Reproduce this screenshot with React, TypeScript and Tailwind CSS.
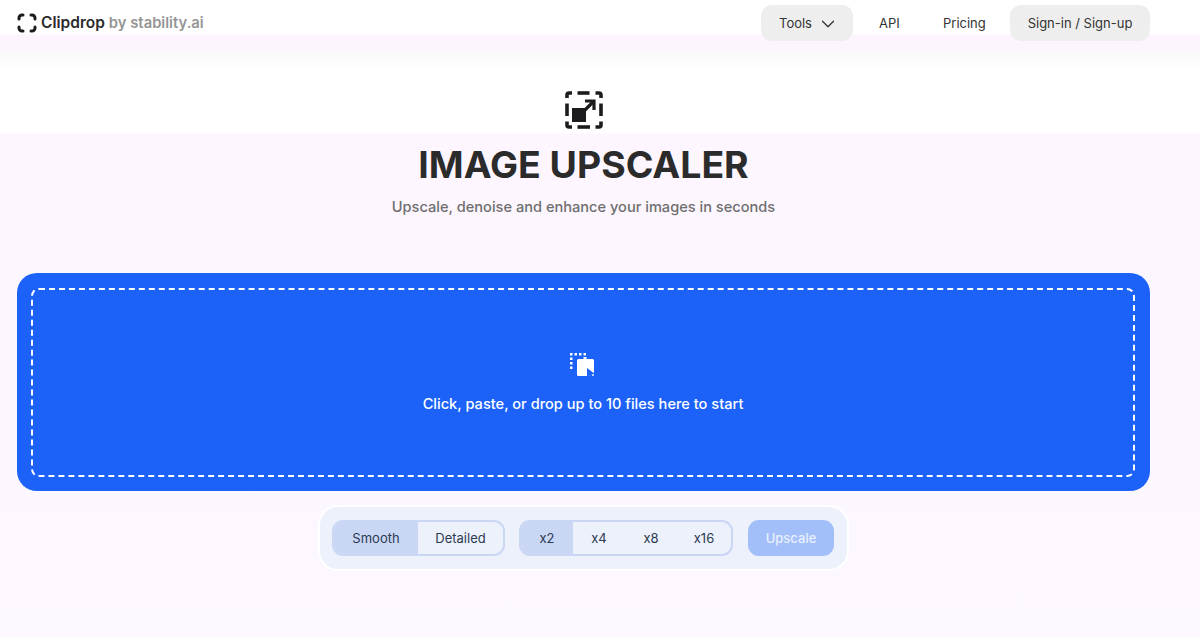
import React from 'react';
import { ChevronDown } from 'lucide-react';

const Logo = () => (
  <svg width="20" height="20" viewBox="0 0 20 20" fill="none" stroke="#1c1c1e" strokeWidth="3" strokeLinecap="round" strokeLinejoin="round">
    <path d="M2 6V5a3 3 0 0 1 3-3h1" />
    <path d="M14 2h1a3 3 0 0 1 3 3v1" />
    <path d="M18 14v1a3 3 0 0 1-3 3h-1" />
    <path d="M6 18H5a3 3 0 0 1-3-3v-1" />
  </svg>
);

const UpscaleIcon = () => (
  <svg width="38" height="38" viewBox="0 0 38 38" fill="none">
    <g stroke="#1c1c1e" strokeWidth="3.600">
      <path d="M2 7V4a2 2 0 0 1 2-2h3" />
      <path d="M12.500 2h12" />
      <path d="M30.500 2H34a2 2 0 0 1 2 2v3" />
      <path d="M36 12.500v12.500" />
      <path d="M36 30.500V34a2 2 0 0 1-2 2h-3.500" />
      <path d="M25 36H12.500" />
      <path d="M7 36H4a2 2 0 0 1-2-2v-3.500" />
      <path d="M2 25V12.500" />
      <path d="M19 20L28 11" strokeWidth="3.200" />
      <path d="M20 10h9v9" strokeWidth="3.200" />
    </g>
    <rect x="7" y="17" width="14" height="14" fill="#1c1c1e" />
  </svg>
);

const DropIcon = () => (
  <svg width="28" height="28" viewBox="0 0 28 28" fill="none">
    <g fill="#ffffff">
      <rect x="1" y="1" width="2.500" height="2.500" />
      <rect x="5.500" y="1" width="2.500" height="2.500" />
      <rect x="10" y="1" width="2.500" height="2.500" />
      <rect x="14.500" y="1" width="2.500" height="2.500" />
      <rect x="1" y="5.500" width="2.500" height="2.500" />
      <rect x="1" y="10" width="2.500" height="2.500" />
      <rect x="1" y="14.500" width="2.500" height="2.500" />
      <rect x="8" y="7" width="17" height="17" rx="1.500" />
      <rect x="14.500" y="5" width="3" height="2" />
    </g>
    <path d="M18 16l8 6-3.500.4 2.500 3.600-2 1.200-2.500-3.600-2.500 2.400z" fill="#1c62f8" />
  </svg>
);

const App: React.FC = () => {
  return (
    <div className="w-[1200px] h-[637px] overflow-hidden font-['Inter',sans-serif] bg-[linear-gradient(to_bottom,#ffffff_0px,#ffffff_34px,#fdf5fe_35px,#fdf5fe_50px,#f8f8f8_51px,#ffffff_68px,#ffffff_133px,#fdf6ff_134px,#fdf7ff_100%)]">
      <header className="flex items-center justify-between h-[46px] pl-[17px] pr-[50px]">
        <div className="flex items-center gap-[4px]">
          <Logo />
          <span className="text-[15.500px] font-semibold text-[#2a2a2c]">Clipdrop</span>
          <span className="text-[14.800px] font-semibold text-[#959595]">by stability.ai</span>
        </div>
        <nav className="flex items-center text-[13px] text-[#333333]">
          <button className="flex items-center gap-[5px] w-[92px] h-[36px] pl-[18px] pt-px rounded-[11px] bg-[#eeeeee]">
            Tools
            <ChevronDown size={22} strokeWidth={1.400} />
          </button>
          <span className="ml-[26px] w-[20px] pt-px">API</span>
          <span className="ml-[44px] w-[42px] pt-px">Pricing</span>
          <button className="ml-[25px] w-[140px] h-[36px] pt-px rounded-[11px] bg-[#eeeeee]">Sign-in / Sign-up</button>
        </nav>
      </header>

      <main className="pl-[17px] pr-[50px]">
        <div className="flex flex-col items-center">
          <div className="mt-[45px]">
            <UpscaleIcon />
          </div>
          <h1 className="mt-[13px] text-[37.400px] leading-[46px] font-bold text-[#2b2b2b]">IMAGE UPSCALER</h1>
          <p className="mt-[7px] text-[14.600px] leading-[24px] font-medium text-[#6e6e6e]">Upscale, denoise and enhance your images in seconds</p>
        </div>

        <div className="mt-[54px] h-[218px] rounded-[20px] bg-[#1c62f8] pt-[15px] pb-[14px] pl-[14px] pr-[15px]">
          <div className="h-full flex flex-col items-center rounded-[8px] border-2 border-dashed border-white">
            <div className="mt-[62px]">
              <DropIcon />
            </div>
            <p className="mt-[12px] text-[14.600px] leading-[24px] font-medium text-white">Click, paste, or drop up to 10 files here to start</p>
          </div>
        </div>

        <div className="flex justify-center mt-[14px]">
          <div className="flex items-center gap-[14px] w-[531px] h-[66px] pl-[12px] rounded-[20px] bg-[#ecf1fc] border-2 border-white text-[13px] text-[#2c3a52]">
            <div className="flex h-[36px] w-[173px] rounded-[11px] border-2 border-[#c9d7f5] overflow-hidden">
              <span className="flex items-center justify-center w-[84px] pt-px bg-[#c9d7f5]">Smooth</span>
              <span className="flex items-center justify-center flex-1 pt-px">Detailed</span>
            </div>
            <div className="flex h-[36px] w-[214px] rounded-[11px] border-2 border-[#c9d7f5] overflow-hidden">
              <span className="flex items-center justify-center w-[52px] pt-px bg-[#c9d7f5]">x2</span>
              <span className="flex items-center justify-center w-[52px] pt-px">x4</span>
              <span className="flex items-center justify-center w-[52px] pt-px">x8</span>
              <span className="flex items-center justify-center flex-1 pt-px">x16</span>
            </div>
            <button className="ml-px w-[86px] h-[36px] pt-px rounded-[11px] bg-[#a3bffa] text-[#e8effe] font-medium">Upscale</button>
          </div>
        </div>
      </main>
    </div>
  );
};

export default App;
